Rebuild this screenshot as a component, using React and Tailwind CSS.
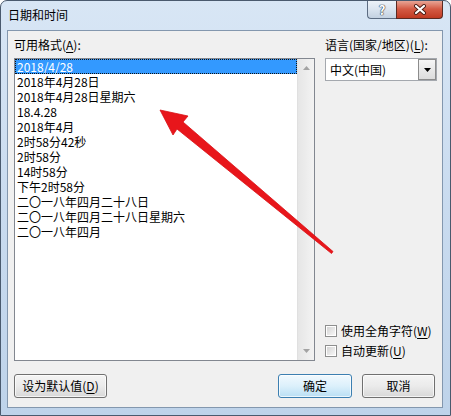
import React from "react";

const formats = [
  "2018/4/28",
  "2018年4月28日",
  "2018年4月28日星期六",
  "18.4.28",
  "2018年4月",
  "2时58分42秒",
  "2时58分",
  "14时58分",
  "下午2时58分",
  "二〇一八年四月二十八日",
  "二〇一八年四月二十八日星期六",
  "二〇一八年四月",
];

function Key({children}) {
  return <span className="underline underline-offset-[2px]">{children}</span>;
}

function Checkbox({children}) {
  return (
    <div className="h-[20px] flex items-center">
      <div className="w-[12px] h-[12px] border border-[#8e8f8f] bg-white p-[1px]">
        <div className="w-full h-full bg-gradient-to-br from-[#d4d4d4] to-[#f7f7f7]" />
      </div>
      <span className="ml-[4px] text-[12px] leading-[16px] text-black whitespace-nowrap">{children}</span>
    </div>
  );
}

function Button({children, width, primary}) {
  const look = primary
    ? "border-[#3c7fb1] bg-gradient-to-b from-[#f1f9fe] via-[#dcf0fb] to-[#b9dff4]"
    : "border-[#707070] bg-gradient-to-b from-[#f4f4f4] via-[#ebebeb] to-[#d8d8d8]";
  return (
    <div className={`${width} h-[24px] rounded-[3px] border ${look} flex items-center justify-center text-[12px] leading-[16px] text-black shadow-[inset_0_0_0_1px_rgba(255,255,255,0.7)]`}>
      {children}
    </div>
  );
}

export default function App() {
  return (
    <div className="relative w-[451px] h-[416px] flex flex-col rounded-t-[7px] border border-[#4a5a6e] bg-gradient-to-b from-[#d8e6f5] via-[#c9dbef] to-[#bed3ea] font-['Noto_Sans_CJK_SC',sans-serif] overflow-hidden">
      {/* title bar */}
      <div className="h-[29px] flex justify-between items-start">
        <div className="pl-[7px] pt-[6px] text-[12px] leading-[16px] text-black">日期和时间</div>
        <div className="flex mr-[7px] -mt-[1px]">
          <div className="w-[29px] h-[19px] rounded-bl-[4px] border border-t-0 border-r-0 border-[#5c6c82] bg-gradient-to-b from-[#eef3f9] via-[#dbe5f0] to-[#c3d1e1] flex items-center justify-center text-[13px] font-bold leading-none text-white [text-shadow:0_0_1px_#2c3948,0_0_1px_#2c3948,0_0_1px_#2c3948]">
            ?
          </div>
          <div className="w-[47px] h-[19px] rounded-br-[4px] border border-t-0 border-[#5a2a22] bg-gradient-to-b from-[#e9ad9f] via-[#d45a44] to-[#c03a22] flex items-center justify-center">
            <svg width="14" height="11" viewBox="0 0 14 11">
              <path d="M3 2 L11 9 M11 2 L3 9" stroke="#4a1d15" strokeWidth="4" strokeLinecap="round" />
              <path d="M3 2 L11 9 M11 2 L3 9" stroke="#ffffff" strokeWidth="2.2" strokeLinecap="round" />
            </svg>
          </div>
        </div>
      </div>

      {/* client area */}
      <div className="ml-[6px] mr-[7px] h-[378px] border border-[#8397ae] bg-[#f0f0f0] flex flex-col">
        <div className="flex pl-[6px] pt-[6px]">
          {/* left column */}
          <div className="w-[301px] flex flex-col">
            <div className="h-[16px] text-[12px] leading-[16px] text-black">可用格式(<Key>A</Key>):</div>
            <div className="mt-[5px] h-[303px] border border-[#828790] bg-white flex">
              <div className="flex-1 flex flex-col">
                {formats.map((f, i) => (
                  <div
                    key={f}
                    className={`h-[15px] pl-[2px] text-[12px] leading-[15px] whitespace-nowrap ${i === 0 ? "bg-[#3399ff] text-white outline outline-dotted outline-[#111] -outline-offset-1" : "text-black"}`}
                  >
                    {f}
                  </div>
                ))}
              </div>
              <div className="w-[17px] bg-gradient-to-r from-[#e6e6e6] to-[#f3f3f3] border-l border-[#e0e0e0] flex flex-col justify-between items-center py-[7px]">
                <svg width="7" height="4" viewBox="0 0 7 4"><path d="M0 4 L3.5 0 L7 4 Z" fill="#a3a3a3" /></svg>
                <svg width="7" height="4" viewBox="0 0 7 4"><path d="M0 0 L7 0 L3.5 4 Z" fill="#a3a3a3" /></svg>
              </div>
            </div>
          </div>

          {/* right column */}
          <div className="ml-[10px] w-[112px] flex flex-col">
            <div className="h-[16px] text-[12px] leading-[16px] text-black whitespace-nowrap">语言(国家/地区)(<Key>L</Key>):</div>
            <div className="mt-[5px] h-[23px] border border-[#a4a8ae] bg-white flex">
              <div className="flex-1 pl-[4px] text-[12px] leading-[21px] text-black">中文(中国)</div>
              <div className="w-[18px] border border-[#8c8c8c] bg-gradient-to-b from-[#f6f6f6] to-[#dcdcdc] flex items-center justify-center">
                <svg width="7" height="4" viewBox="0 0 7 4"><path d="M0 0 L7 0 L3.5 4 Z" fill="#000" /></svg>
              </div>
            </div>
            <div className="mt-auto">
              <Checkbox>使用全角字符(<Key>W</Key>)</Checkbox>
              <Checkbox>自动更新(<Key>U</Key>)</Checkbox>
            </div>
          </div>
        </div>

        {/* buttons */}
        <div className="mt-[13px] flex pl-[6px] pr-[7px]">
          <Button width="w-[93px]">设为默认值(<Key>D</Key>)</Button>
          <div className="flex-1" />
          <Button width="w-[74px]" primary>确定</Button>
          <div className="w-[10px]" />
          <Button width="w-[73px]">取消</Button>
        </div>
      </div>

      {/* annotation arrow */}
      <svg className="absolute left-0 top-0 pointer-events-none" width="451" height="416" viewBox="-1 -1 451 416">
        <polygon
          points="158,108 186,114 181,120 331,249.5 329.5,251.5 175,127 171,133"
          fill="#e8161b"
          stroke="#d81015"
          strokeWidth="0.8"
          strokeLinejoin="round"
        />
      </svg>
    </div>
  );
}
